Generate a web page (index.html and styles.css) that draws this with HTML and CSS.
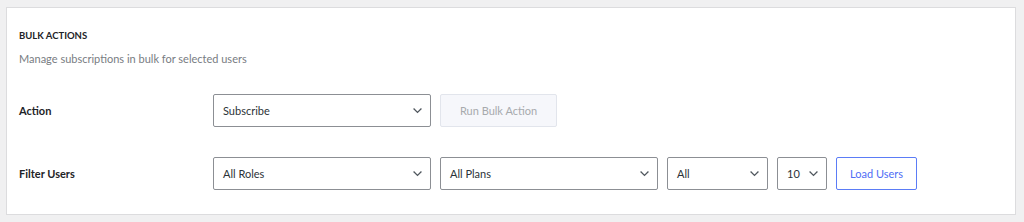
FILE: index.html
```html
<!DOCTYPE html>
<html>
<head>
<meta charset="utf-8">
<link rel="stylesheet" href="styles.css">
</head>
<body>
<div class="panel">
  <h2 class="title">BULK ACTIONS</h2>
  <p class="desc">Manage subscriptions in bulk for selected users</p>
  <div class="row row-action">
    <div class="label">Action</div>
    <div class="controls">
      <div class="select w-action"><span>Subscribe</span><svg class="chev" viewBox="0 0 12 8"><path d="M1.5 1.8 6 6.2 10.5 1.8" fill="none" stroke="#50575e" stroke-width="1.5"/></svg></div>
      <button class="btn btn-disabled">Run Bulk Action</button>
    </div>
  </div>
  <div class="row row-filter">
    <div class="label">Filter Users</div>
    <div class="controls">
      <div class="select w-roles"><span>All Roles</span><svg class="chev" viewBox="0 0 12 8"><path d="M1.5 1.8 6 6.2 10.5 1.8" fill="none" stroke="#50575e" stroke-width="1.5"/></svg></div>
      <div class="select w-plans"><span>All Plans</span><svg class="chev" viewBox="0 0 12 8"><path d="M1.5 1.8 6 6.2 10.5 1.8" fill="none" stroke="#50575e" stroke-width="1.5"/></svg></div>
      <div class="select w-all"><span>All</span><svg class="chev" viewBox="0 0 12 8"><path d="M1.5 1.8 6 6.2 10.5 1.8" fill="none" stroke="#50575e" stroke-width="1.5"/></svg></div>
      <div class="select w-num"><span>10</span><svg class="chev" viewBox="0 0 12 8"><path d="M1.5 1.8 6 6.2 10.5 1.8" fill="none" stroke="#50575e" stroke-width="1.5"/></svg></div>
      <button class="btn btn-primary">Load Users</button>
    </div>
  </div>
</div>
</body>
</html>
```
FILE: styles.css
```css
html, body {
  margin: 0;
  padding: 0;
  background: #f0f0f1;
}
body {
  padding: 7px 8px 9px 6px;
  font-family: "Lato", "Noto Sans", sans-serif;
  color: #1d2327;
}
.panel {
  background: #fff;
  border: 1px solid #dcdcde;
  padding: 22px 12px 21px 12px;
  height: 163px;
}
.title {
  margin: 0;
  font-size: 9.5px;
  font-weight: 700;
  line-height: 12px;
  color: #1d2327;
}
.desc {
  margin: 9px 0 0 0;
  font-size: 11px;
  line-height: 15px;
  color: #787c82;
}
.row {
  display: flex;
  align-items: center;
}
.row-action { margin-top: 28px; }
.row-filter { margin-top: 30px; }
.label {
  width: 194px;
  font-size: 11px;
  font-weight: 700;
  color: #1d2327;
}
.controls {
  display: flex;
  gap: 9px;
}
.select {
  box-sizing: border-box;
  height: 33px;
  border: 1px solid #8c8f94;
  border-radius: 2px;
  display: flex;
  align-items: center;
  justify-content: space-between;
  padding: 0 7px 0 9px;
  font-size: 11px;
  color: #2c3338;
  background: #fff;
}
.chev { width: 11px; height: 7px; }
.w-action { width: 218px; }
.w-roles { width: 218px; }
.w-plans { width: 218px; }
.w-all { width: 101px; }
.w-num { width: 50px; }
.btn {
  box-sizing: border-box;
  height: 33px;
  border-radius: 2px;
  font-family: inherit;
  font-size: 11px;
  padding: 0;
  background: #fff;
}
.btn-disabled {
  width: 117px;
  background: #f6f7fb;
  border: 1px solid #e2e5ec;
  color: #a7aaad;
}
.btn-primary {
  width: 81px;
  border: 1px solid #5b7cf6;
  color: #4f6df5;
}
```
